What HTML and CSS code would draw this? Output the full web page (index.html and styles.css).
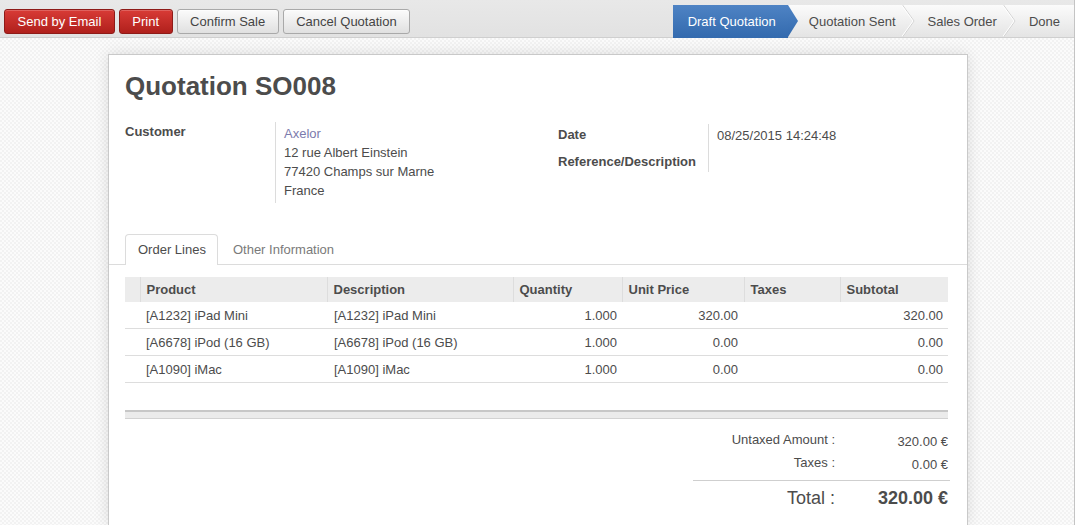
FILE: index.html
```html
<!DOCTYPE html>
<html>
<head>
<meta charset="utf-8">
<title>Quotation SO008</title>
<link rel="stylesheet" href="styles.css">
</head>
<body>
<div class="page">
  <div class="toolbar">
    <div class="buttons">
      <button class="btn btn-red">Send by Email</button>
      <button class="btn btn-red">Print</button>
      <button class="btn">Confirm Sale</button>
      <button class="btn">Cancel Quotation</button>
    </div>
    <div class="statusbar">
      <span class="st st-active">Draft Quotation</span>
      <svg class="st-tip" width="10" height="32" viewBox="0 0 10 32"><defs><linearGradient id="bg" x1="0" y1="0" x2="0" y2="1"><stop offset="0" stop-color="#4e83c4"/><stop offset="1" stop-color="#336aae"/></linearGradient></defs><polygon points="0,0 10,16 0,32" fill="url(#bg)"/></svg>
      <span class="st st-first">Quotation Sent</span>
      <svg class="chev" width="13" height="32" viewBox="0 0 13 32"><polyline points="0.5,0 12,16 0.5,32" fill="none" stroke="#d2d2d2" stroke-width="1"/><polyline points="-0.5,0 11,16 -0.5,32" fill="none" stroke="#ffffff" stroke-width="1"/></svg>
      <span class="st">Sales Order</span>
      <svg class="chev" width="13" height="32" viewBox="0 0 13 32"><polyline points="0.5,0 12,16 0.5,32" fill="none" stroke="#d2d2d2" stroke-width="1"/><polyline points="-0.5,0 11,16 -0.5,32" fill="none" stroke="#ffffff" stroke-width="1"/></svg>
      <span class="st st-last">Done</span>
    </div>
  </div>

  <div class="content">
    <div class="sheet">
      <h1 class="title">Quotation SO008</h1>

      <div class="groups">
        <div class="group group-left">
          <div class="label">Customer</div>
          <div class="value value-sep">
            <div class="link">Axelor</div>
            <div>12 rue Albert Einstein</div>
            <div>77420 Champs sur Marne</div>
            <div>France</div>
          </div>
        </div>
        <div class="group group-right">
          <div class="labels">
            <div class="label rlabel">Date</div>
            <div class="label rlabel">Reference/Description</div>
          </div>
          <div class="value value-sep rvalue">08/25/2015 14:24:48</div>
        </div>
      </div>

      <div class="tabs">
        <div class="tab tab-active">Order Lines</div>
        <div class="tab">Other Information</div>
      </div>

      <div class="tabpane">
        <table class="lines">
          <colgroup>
            <col class="c-handle"><col class="c-prod"><col class="c-desc"><col class="c-qty"><col class="c-price"><col class="c-tax"><col class="c-sub">
          </colgroup>
          <thead>
            <tr><th class="handle"></th><th>Product</th><th>Description</th><th>Quantity</th><th>Unit Price</th><th>Taxes</th><th>Subtotal</th></tr>
          </thead>
          <tbody>
            <tr><td></td><td>[A1232] iPad Mini</td><td>[A1232] iPad Mini</td><td class="num">1.000</td><td class="num">320.00</td><td></td><td class="num">320.00</td></tr>
            <tr><td></td><td>[A6678] iPod (16 GB)</td><td>[A6678] iPod (16 GB)</td><td class="num">1.000</td><td class="num">0.00</td><td></td><td class="num">0.00</td></tr>
            <tr><td></td><td>[A1090] iMac</td><td>[A1090] iMac</td><td class="num">1.000</td><td class="num">0.00</td><td></td><td class="num">0.00</td></tr>
          </tbody>
        </table>

        <div class="band"></div>

        <div class="totals">
          <div class="t-label">Untaxed Amount :</div><div class="t-value">320.00 €</div>
          <div class="t-label">Taxes :</div><div class="t-value">0.00 €</div>
          <div class="t-line"></div>
          <div class="t-label t-big">Total :</div><div class="t-value t-big t-bold">320.00 €</div>
        </div>
      </div>
    </div>
  </div>
</div>
</body>
</html>
```

FILE: styles.css
```css
html, body {
  margin: 0;
  padding: 0;
  height: 100%;
  overflow: hidden;
}
body {
  font-family: "Liberation Sans", Arial, sans-serif;
  font-size: 13px;
  color: #4c4c4c;
  background: #ffffff;
}
.page {
  width: 1074px;
  height: 525px;
  display: flex;
  flex-direction: column;
  border-right: 1px solid #c4c4c4;
  overflow: hidden;
}
.toolbar {
  height: 37px;
  flex: none;
  display: flex;
  justify-content: space-between;
  align-items: flex-start;
  background: linear-gradient(#e8e8e8, #e2e2e2);
  border-bottom: 1px solid #cfcfcf;
}
.buttons {
  display: flex;
  gap: 4px;
  padding: 9px 0 0 4px;
}
.btn {
  font-family: "Liberation Sans", Arial, sans-serif;
  font-size: 13px;
  height: 25px;
  padding: 0 12.5px;
  border: 1px solid #a9a9a9;
  border-radius: 3px;
  background: linear-gradient(#fbfbfb, #e0e0e0);
  color: #444;
  line-height: 23px;
  box-shadow: inset 0 1px 0 rgba(255,255,255,0.6);
}
.btn-red {
  border-color: #8e1b18;
  background: linear-gradient(#d83b36, #b0201c);
  color: #fff;
  box-shadow: inset 0 1px 0 rgba(255,255,255,0.2);
}
.statusbar {
  display: flex;
  align-items: center;
  margin-top: 5px;
  height: 32px;
  background: linear-gradient(#fbfbfb, #e4e4e4);
}
.st {
  line-height: 32px;
  padding: 1px 6px 0 13px;
  color: #4c4c4c;
  white-space: nowrap;
}
.st-active {
  padding: 1px 12px 0 15px;
  color: #fff;
  background: linear-gradient(#4e83c4, #336aae);
}
.st-first { padding-left: 11px; }
.st-last { padding-right: 14px; }
.st-tip, .chev { display: block; flex: none; }

.content {
  flex: 1;
  min-height: 0;
  overflow: hidden;
  padding-top: 16px;
  background: repeating-conic-gradient(#f2f2f2 0 25%, #fbfbfb 0 50%) 0 0 / 4px 4px;
}
.sheet {
  width: 858px;
  height: 470px;
  margin: 0 0 0 108px;
  background: #fff;
  border: 1px solid #c9c9c9;
  border-bottom: none;
  box-shadow: 0 0 14px rgba(0,0,0,0.12);
}
.title {
  margin: 0;
  padding: 15px 16px 0 16px;
  font-size: 26px;
  line-height: 32px;
  font-weight: bold;
  color: #4c4c4c;
}
.groups {
  display: grid;
  grid-template-columns: 433px 1fr;
  padding: 20px 19px 0 16px;
}
.group {
  display: grid;
  grid-template-columns: 150px 1fr;
  align-items: start;
}
.label {
  font-weight: bold;
  line-height: 19px;
  white-space: nowrap;
}
.value {
  line-height: 19px;
}
.value-sep {
  border-left: 1px solid #dcdcdc;
  padding: 2px 0 3px 8px;
}
.link { color: #7c7bad; }
.rlabel { padding: 3px 0 5px 0; }
.rvalue {
  margin-top: 2px;
  height: 43px;
  padding-top: 2px;
}
.tabs {
  display: flex;
  gap: 2px;
  margin-top: 31px;
  padding-left: 16px;
  border-bottom: 1px solid #dcdcdc;
}
.tab {
  height: 29px;
  line-height: 29px;
  padding: 0 11px 0 12px;
  border: 1px solid transparent;
  border-bottom: none;
  border-radius: 4px 4px 0 0;
  color: #7a7a7a;
  margin-bottom: -1px;
}
.tab-active {
  border-color: #dcdcdc;
  background: #fff;
  color: #4c4c4c;
  height: 30px;
}
.tabpane {
  padding: 12px 19px 0 16px;
}
.lines {
  width: 823px;
  border-collapse: collapse;
  table-layout: fixed;
}
.c-handle { width: 15px; }
.c-prod { width: 187px; }
.c-desc { width: 186px; }
.c-qty { width: 109px; }
.c-price { width: 122px; }
.c-tax { width: 96px; }
.c-sub { width: 108px; }
.lines th {
  height: 25px;
  padding: 0 0 0 6px;
  background: #ececec;
  text-align: left;
  font-weight: bold;
  border-left: 1px solid #dddddd;
  color: #4c4c4c;
}
.lines th:first-child { border-left: none; padding: 0; }
.lines td {
  height: 26px;
  padding: 0 0 0 6px;
  border-bottom: 1px solid #dddddd;
  white-space: nowrap;
  color: #4c4c4c;
}
.lines td:first-child { padding: 0; }
.lines td:nth-child(3) { padding-left: 7px; }
.lines td.num {
  text-align: right;
  padding: 0 5px 0 0;
}
.lines td:nth-child(5).num { padding-right: 6px; }
.band {
  margin-top: 27px;
  height: 6px;
  border-top: 2px solid #c7c7c7;
  border-bottom: 1px solid #d2d2d2;
  background: #ebebeb;
}
.totals {
  width: 257px;
  margin: 9px -2px 0 auto;
  display: grid;
  grid-template-columns: 1fr 113px;
}
.t-label {
  text-align: right;
  line-height: 19px;
  padding: 2px 2px 2px 0;
}
.t-value {
  text-align: right;
  line-height: 19px;
  padding: 4px 2px 0 0;
}
.t-line {
  grid-column: 1 / 3;
  margin-top: 6px;
  border-top: 1px solid #cfcfcf;
}
.t-big {
  font-size: 18px;
  line-height: 22px;
  padding: 6px 2px 0 0;
}
.t-bold { font-weight: bold; }
```
